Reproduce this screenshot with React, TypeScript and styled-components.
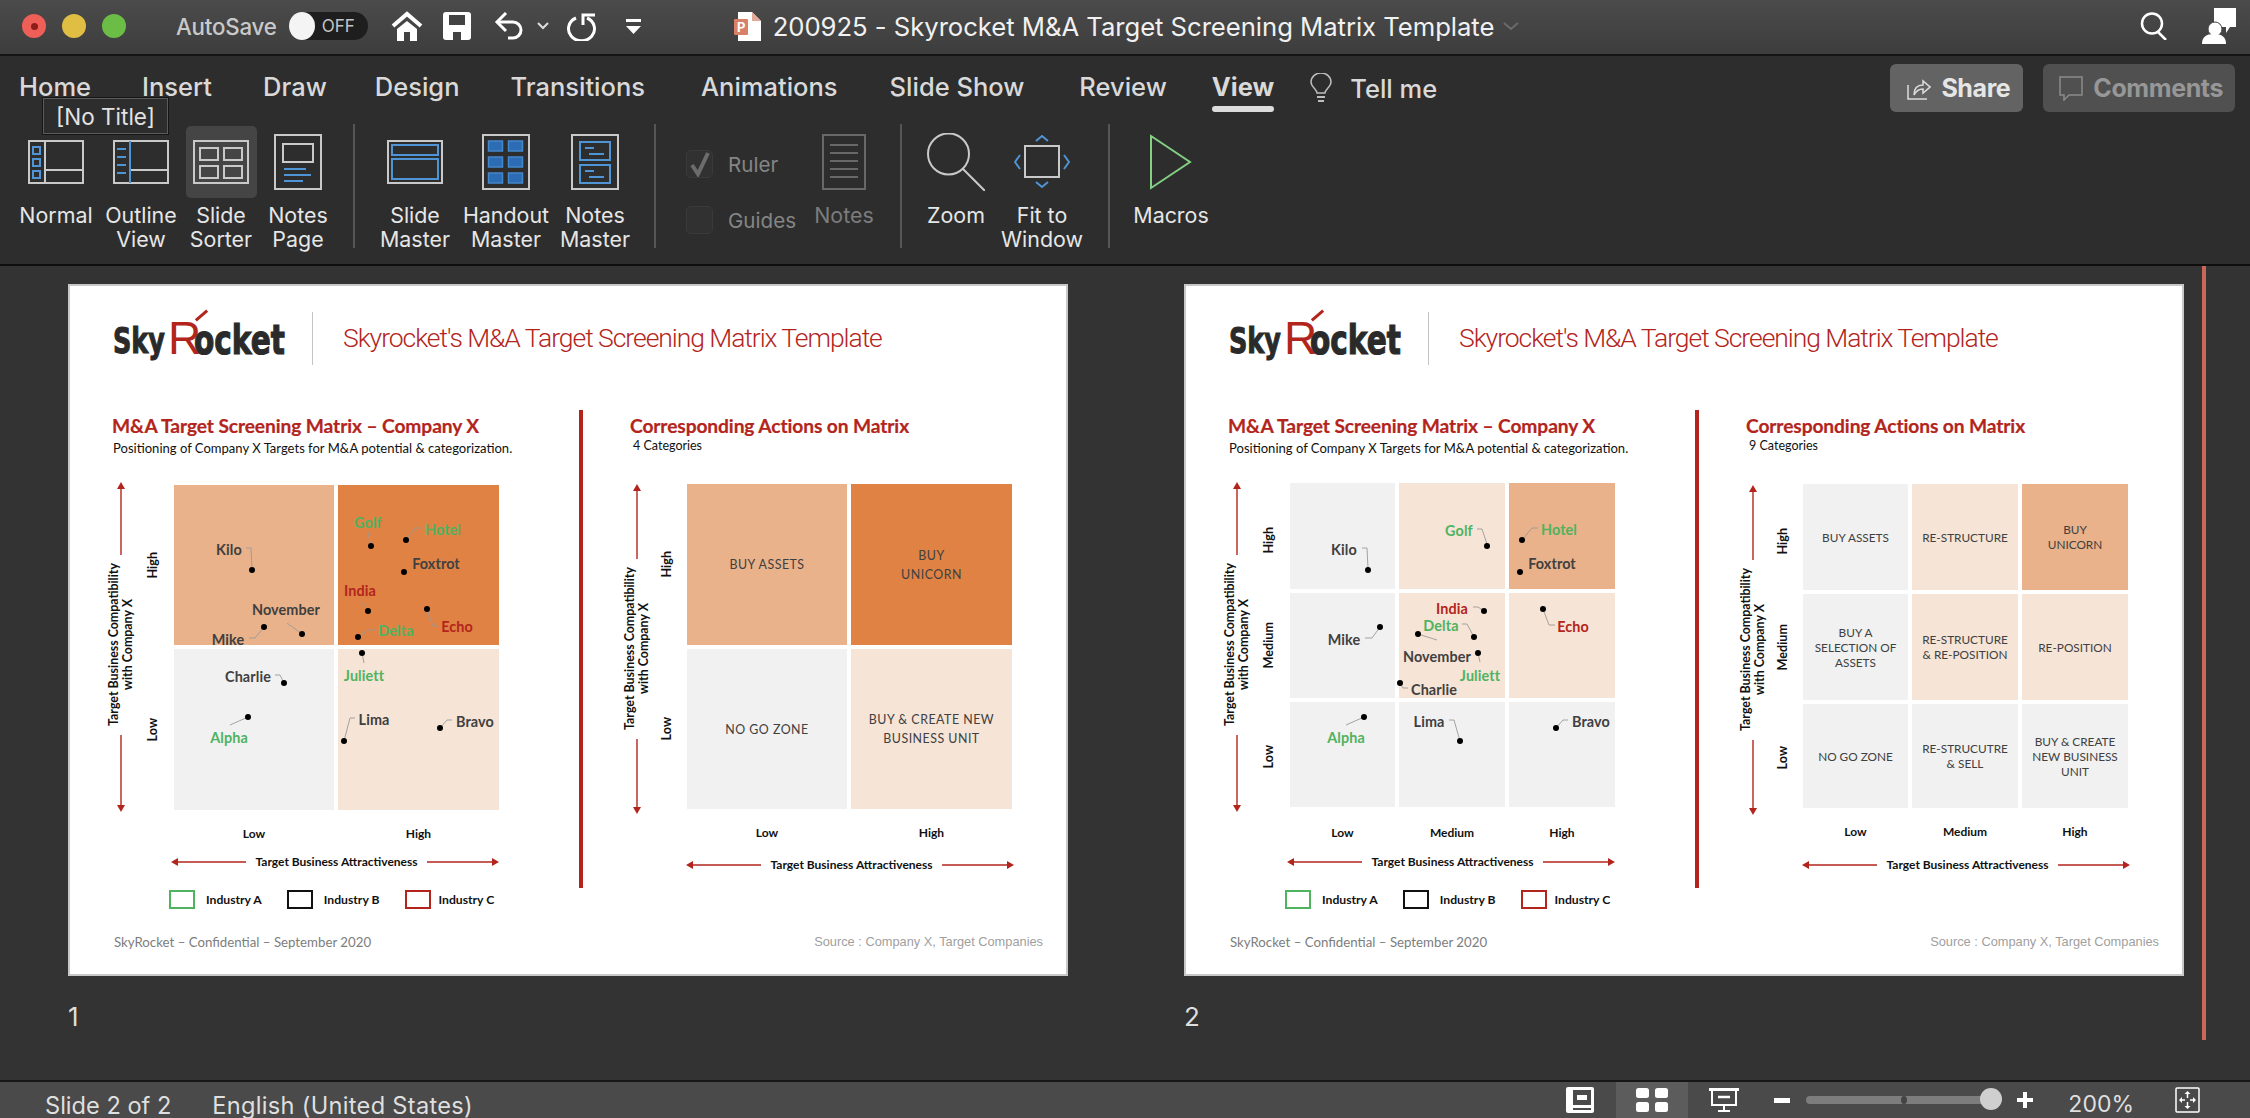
import { Fragment } from "react";
import styled, { createGlobalStyle } from "styled-components";

const RED = "#b3251c";
const GREEN = "#4fb35f";
const GREY = "#404040";
const SAND = "#f6e4d6";
const PEACH = "#eab28a";
const ORANGE = "#df8244";
const PALE = "#f1f1f1";

const GlobalStyle = createGlobalStyle`
  *,*::before,*::after{ box-sizing:border-box; }
  html,body{ margin:0; padding:0; background:#333; }
  body{ font-family: Inter, "Noto Sans", sans-serif; -webkit-font-smoothing:antialiased; }
`;

/* --- Window chrome --- */
const Page = styled.div`
  width: 2250px;
  height: 1118px;
  overflow: hidden;
  display: flex;
  flex-direction: column;
  background: #333;
`;

const TitleBar = styled.header`
  height: 56px;
  flex: none;
  display: flex;
  align-items: center;
  padding: 0 14px 2px 22px;
  background: linear-gradient(#4b4b4b, #3d3d3d);
  border-bottom: 2px solid #141414;
`;

const Light = styled.span<{ $c: string }>`
  width: 24px;
  height: 24px;
  border-radius: 50%;
  margin-right: 16px;
  background: ${(p) => p.$c};
  display: flex;
  align-items: center;
  justify-content: center;
`;
const LightDot = styled.i`
  width: 7px;
  height: 7px;
  border-radius: 50%;
  background: #8f1d17;
`;

const AutoSave = styled.span`
  margin-left: 34px;
  font-size: 22.3px;
  font-weight: 500;
  color: #c9c9c9;
  letter-spacing: -0.2px;
`;
const Toggle = styled.span`
  margin-left: 12px;
  width: 79px;
  height: 28px;
  border-radius: 14px;
  background: #1e1e1e;
  display: flex;
  align-items: center;
  gap: 7px;
  font-size: 17px;
  color: #c4c4c4;
`;
const Knob = styled.i`
  width: 26px;
  height: 28px;
  border-radius: 50%;
  background: #f4f4f4;
`;
const Slot = styled.span<{ $ml: number }>`
  margin-left: ${(p) => p.$ml}px;
  display: flex;
  align-items: center;
`;
const DocTitle = styled.span`
  margin-left: 12px;
  font-size: 25.7px;
  color: #f1f1f1;
  white-space: nowrap;
  letter-spacing: -0.05px;
`;
const RightTools = styled.span`
  margin-left: auto;
  display: flex;
  align-items: center;
  gap: 34px;
`;

const Ribbon = styled.section`
  height: 210px;
  flex: none;
  background: #2d2d2d;
  border-bottom: 2px solid #0e0e0e;
  position: relative;
`;
const TabRow = styled.nav`
  height: 70px;
  display: flex;
  align-items: flex-start;
  padding: 8px 15px 0 19px;
  gap: 51px;
`;
const Tab = styled.span<{ $active?: boolean; $nudge?: number }>`
  height: 48px;
  line-height: 46px;
  margin-left: ${(p) => p.$nudge ?? 0}px;
  font-size: 25.5px;
  font-weight: ${(p) => (p.$active ? 700 : 500)};
  color: #d9d9d9;
  position: relative;
  white-space: nowrap;
  ${(p) =>
    p.$active &&
    `&::after{content:"";position:absolute;left:0;right:0;bottom:0;height:6px;border-radius:3px;background:#dcdcdc;}`}
`;
const TellMe = styled.span`
  display: flex;
  align-items: center;
  gap: 18px;
  height: 48px;
  margin-left: -15px;
  font-size: 25.5px;
  font-weight: 500;
  color: #d9d9d9;
`;
const TopActions = styled.div`
  margin-left: auto;
  display: flex;
  gap: 20px;
`;
const ActionButton = styled.span<{ $muted?: boolean }>`
  height: 48px;
  padding: ${(p) => (p.$muted ? "0 12px 0 16px" : "0 13px 0 17px")};
  display: flex;
  align-items: center;
  gap: 10px;
  border-radius: 6px;
  font-size: 25px;
  font-weight: 700;
  letter-spacing: -0.4px;
  background: ${(p) => (p.$muted ? "#505050" : "#636363")};
  color: ${(p) => (p.$muted ? "#979797" : "#e6e6e6")};
`;
const Tooltip = styled.div`
  position: absolute;
  left: 43px;
  top: 42px;
  width: 125px;
  height: 36px;
  display: flex;
  align-items: center;
  justify-content: center;
  background: #2d2d2d;
  border: 1px solid #5b5b5b;
  box-shadow: 0 0 0 1px #161616;
  font-size: 22.5px;
  color: #e2e2e2;
`;

const ToolRow = styled.div`
  display: flex;
  align-items: flex-start;
  padding-left: 14px;
`;
const Tool = styled.div<{ $w: number; $ml?: number }>`
  width: ${(p) => p.$w}px;
  margin-left: ${(p) => p.$ml ?? 0}px;
  display: flex;
  flex-direction: column;
  align-items: center;
  flex: none;
`;
const IconWell = styled.div<{ $on?: boolean }>`
  width: 71px;
  height: 72px;
  display: flex;
  align-items: center;
  justify-content: center;
  border-radius: 5px;
  background: ${(p) => (p.$on ? "#454545" : "transparent")};
`;
const ToolLabel = styled.div<{ $off?: boolean }>`
  margin-top: 5px;
  font-size: 21.4px;
  line-height: 24px;
  text-align: center;
  white-space: pre-line;
  color: ${(p) => (p.$off ? "#7c7c7c" : "#e6e6e6")};
`;
const Divider = styled.div<{ $ml: number; $mr: number }>`
  width: 2px;
  height: 124px;
  margin: -2px ${(p) => p.$mr}px 0 ${(p) => p.$ml}px;
  background: #555;
  flex: none;
`;
const Checks = styled.div`
  width: 128px;
  flex: none;
  padding-top: 24px;
  display: flex;
  flex-direction: column;
  gap: 28px;
`;
const CheckRow = styled.div`
  display: flex;
  align-items: center;
  gap: 15px;
  font-size: 20.6px;
  color: #858585;
`;
const CheckBox = styled.span`
  width: 27px;
  height: 28px;
  border-radius: 5px;
  background: #313131;
  border: 1px solid #3a3a3a;
  display: flex;
  align-items: center;
  justify-content: center;
`;

/* --- Slide sorter --- */
const Workspace = styled.main`
  flex: 1;
  display: flex;
  gap: 116px;
  padding: 18px 0 0 68px;
  position: relative;
`;
const SlideColumn = styled.div`
  display: flex;
  flex-direction: column;
`;
const SlideNumber = styled.div`
  margin-top: 26px;
  font-size: 26px;
  line-height: 30px;
  color: #dedede;
`;
const Selection = styled.div`
  width: 4px;
  height: 774px;
  margin: -18px 0 0 -98px;
  background: #c9675a;
`;

const Slide = styled.article`
  width: 1000px;
  height: 692px;
  border: 2px solid #c8c8c8;
  background: #fff;
  display: flex;
  flex-direction: column;
  font-family: Lato, "Noto Sans", sans-serif;
`;
const SlideHead = styled.div`
  height: 53px;
  margin: 26px 0 0 43px;
  display: flex;
  align-items: center;
`;
const Logo = styled.div`
  position: relative;
  width: 171px;
  height: 53px;
  display: flex;
  align-items: center;
  flex: none;
  font-family: "DejaVu Sans", sans-serif;
  color: #2a2a2a;
`;
const LogoInk = styled.span<{ $w: number; $sx: number; $sy: number }>`
  display: inline-block;
  width: ${(p) => p.$w}px;
  margin-top: 2px;
  font-size: 34px;
  font-weight: 700;
  line-height: 40px;
  white-space: nowrap;
  transform-origin: left center;
  transform: scale(${(p) => p.$sx}, ${(p) => p.$sy});
  -webkit-text-stroke: 1px #2a2a2a;
`;
const LogoR = styled.span`
  display: inline-block;
  width: 26px;
  margin: 0 0 2px 4px;
  font-family: "Liberation Sans", sans-serif;
  font-size: 46px;
  line-height: 48px;
  color: ${RED};
`;
const LogoTick = styled.i`
  position: absolute;
  left: 81px;
  top: 2px;
  width: 15px;
  height: 3px;
  background: ${RED};
  transform: rotate(-41deg);
`;
const HeadRule = styled.div`
  width: 1px;
  height: 53px;
  margin: 0 30px 0 28px;
  background: #c4c4c4;
`;
const HeadTitle = styled.div`
  font-family: Roboto, "Liberation Sans", sans-serif;
  font-size: 26.5px;
  font-weight: 300;
  color: #b3251c;
  letter-spacing: -1.05px;
  white-space: nowrap;
  margin-top: -2px;
`;
const SlideBody = styled.div`
  margin-top: 45px;
  display: flex;
  align-items: flex-start;
`;
const RedRule = styled.div`
  width: 4px;
  height: 478px;
  background: ${RED};
  flex: none;
`;
const Panel = styled.div<{ $w: number; $ml: number }>`
  width: ${(p) => p.$w}px;
  margin-left: ${(p) => p.$ml}px;
  padding-top: 6px;
  flex: none;
`;
const Heading = styled.h2`
  margin: 0 0 0 -1px;
  font-size: 19.2px;
  line-height: 20px;
  font-weight: 700;
  letter-spacing: -0.1px;
  -webkit-text-stroke: 0.2px ${RED};
  color: ${RED};
  white-space: nowrap;
`;
const SubHeading = styled.p<{ $small?: boolean }>`
  margin: ${(p) => (p.$small ? "2px 0 0 2px" : "4px 0 0")};
  font-size: ${(p) => (p.$small ? 12.5 : 13.05)}px;
  line-height: 16px;
  color: #111;
  white-space: nowrap;
`;
const MatrixArea = styled.div<{ $top: number; $h: number; $inset: number }>`
  margin: ${(p) => p.$top}px 0 0 ${(p) => p.$inset}px;
  height: ${(p) => p.$h}px;
  display: flex;
  align-items: flex-start;
`;
const AxisColumn = styled.div<{ $w: number; $top: number }>`
  width: ${(p) => p.$w}px;
  margin-top: ${(p) => p.$top}px;
  display: flex;
  flex-direction: column;
  align-items: center;
  flex: none;
`;
const AxisTitle = styled.div`
  height: 180px;
  display: flex;
  align-items: center;
  justify-content: center;
  writing-mode: vertical-rl;
  transform: rotate(180deg);
  font-size: 12.4px;
  line-height: 14px;
  font-weight: 700;
  text-align: center;
  color: #111;
  white-space: pre-line;
`;
const Levels = styled.div<{ $w: number; $rows: string }>`
  width: ${(p) => p.$w}px;
  margin-right: 7px;
  display: grid;
  grid-template-rows: ${(p) => p.$rows};
  row-gap: 4px;
  flex: none;
`;
const Level = styled.div<{ $pad: number }>`
  display: flex;
  align-items: center;
  justify-content: center;
  padding-top: ${(p) => p.$pad}px;
`;
const LevelText = styled.span`
  writing-mode: vertical-rl;
  transform: rotate(180deg);
  font-size: 12.6px;
  font-weight: 700;
  color: #111;
`;
const Matrix = styled.div<{ $cols: string; $rows: string }>`
  position: relative;
  display: grid;
  grid-template-columns: ${(p) => p.$cols};
  grid-template-rows: ${(p) => p.$rows};
  gap: 4px;
  flex: none;
`;
const Cell = styled.div<{ $bg: string; $size: number; $track: number; $lh: number }>`
  background: ${(p) => p.$bg};
  display: flex;
  align-items: center;
  justify-content: center;
  text-align: center;
  white-space: pre-line;
  font-size: ${(p) => p.$size}px;
  letter-spacing: ${(p) => p.$track}px;
  line-height: ${(p) => p.$lh}px;
  color: ${GREY};
`;
const Overlay = styled.svg`
  position: absolute;
  left: 0;
  top: 0;
  overflow: visible;
  pointer-events: none;
`;
const PointName = styled.span<{ $x: number; $y: number; $c: string }>`
  position: absolute;
  left: ${(p) => p.$x}px;
  top: ${(p) => p.$y}px;
  transform: translate(-50%, -50%);
  font-size: 14.4px;
  font-weight: 700;
  letter-spacing: 0.1px;
  color: ${(p) => p.$c};
  white-space: nowrap;
`;
const XLabels = styled.div<{ $cols: string; $inset: number; $top: number }>`
  margin: ${(p) => p.$top}px 0 0 ${(p) => p.$inset}px;
  display: grid;
  grid-template-columns: ${(p) => p.$cols};
  column-gap: 4px;
  font-size: 12px;
  line-height: 16px;
  font-weight: 700;
  color: #111;
  text-align: center;
`;
const XAxis = styled.div<{ $inset: number; $top: number }>`
  margin: ${(p) => p.$top}px 0 0 ${(p) => p.$inset}px;
  width: 328px;
  display: flex;
  align-items: center;
  justify-content: space-between;
  font-size: 12px;
  line-height: 16px;
  font-weight: 700;
  color: #111;
  white-space: nowrap;
`;
const Legend = styled.div`
  margin: 20px 0 0 56px;
  display: flex;
  align-items: center;
  font-size: 12.2px;
  font-weight: 700;
  color: #111;
`;
const LegendBox = styled.i<{ $c: string; $ml: number; $mr: number }>`
  width: 26px;
  height: 19px;
  margin: 0 ${(p) => p.$mr}px 0 ${(p) => p.$ml}px;
  border: 2px solid ${(p) => p.$c};
`;
const SlideFoot = styled.div`
  margin-top: auto;
  padding: 0 23px 24px 44px;
  display: flex;
  justify-content: space-between;
  align-items: center;
`;
const FootLeft = styled.span`
  font-size: 13.25px;
  line-height: 16px;
  color: #7d7d7d;
`;
const FootRight = styled.span`
  font-family: "Liberation Sans", sans-serif;
  font-size: 12.8px;
  line-height: 16px;
  color: #a0a0a0;
`;

/* --- Status bar --- */
const StatusBar = styled.footer`
  height: 38px;
  flex: none;
  display: flex;
  align-items: center;
  padding-left: 45px;
  border-top: 2px solid #161616;
  background: #4a4a4a;
  font-size: 23.6px;
  color: #dfdfdf;
`;
const StatusText = styled.span<{ $ml?: number; $track?: number }>`
  margin-left: ${(p) => p.$ml ?? 0}px;
  margin-top: 10px;
  letter-spacing: ${(p) => p.$track ?? 0}px;
  white-space: nowrap;
`;
const StatusRight = styled.div`
  margin-left: auto;
  display: flex;
  align-items: center;
  height: 100%;
  padding-right: 50px;
`;
const ViewButton = styled.span<{ $on?: boolean }>`
  width: 72px;
  height: 100%;
  display: flex;
  align-items: center;
  justify-content: center;
  background: ${(p) => (p.$on ? "#5c5c5c" : "transparent")};
`;
const ZoomTrack = styled.div`
  position: relative;
  margin-left: 16px;
  width: 184px;
  height: 8px;
  border-radius: 4px;
  background: #7d7d7d;
`;
const ZoomMark = styled.i`
  position: absolute;
  left: 95px;
  top: 0;
  width: 6px;
  height: 8px;
  border-radius: 50%;
  background: #444;
`;
const ZoomKnob = styled.i`
  position: absolute;
  right: -12px;
  top: -8px;
  width: 22px;
  height: 22px;
  border-radius: 50%;
  background: #cfcfcf;
`;
const ZoomValue = styled.span`
  margin: 8px 41px 0 35px;
  font-size: 23px;
  white-space: nowrap;
`;

/* --- Ribbon drawings --- */
const G = "#c9c9c9";
const B = "#4f94d4";

const NormalIcon = () => (
  <svg width="56" height="44" fill="none" stroke={G} strokeWidth="2">
    <rect x="1" y="1" width="54" height="42" />
    <path d="M17 1v42M17 30h38" />
    <g stroke={B}>
      <rect x="5" y="7" width="7" height="7" />
      <rect x="5" y="19" width="7" height="7" />
      <rect x="5" y="31" width="7" height="7" />
    </g>
  </svg>
);
const OutlineIcon = () => (
  <svg width="56" height="44" fill="none" stroke={G} strokeWidth="2">
    <rect x="1" y="1" width="54" height="42" />
    <path d="M17 30h38" />
    <path d="M17 1v42M4 9h9M4 17h9M4 25h9M4 33h9" stroke={B} />
  </svg>
);
const SorterIcon = () => (
  <svg width="56" height="44" fill="none" stroke={G} strokeWidth="2">
    <rect x="1" y="1" width="54" height="42" />
    <rect x="7" y="8" width="18" height="12" />
    <rect x="31" y="8" width="18" height="12" />
    <rect x="7" y="26" width="18" height="12" />
    <rect x="31" y="26" width="18" height="12" />
  </svg>
);
const NotesPageIcon = () => (
  <svg width="48" height="56" fill="none" stroke={G} strokeWidth="2">
    <rect x="1" y="1" width="46" height="54" />
    <rect x="9" y="10" width="30" height="18" />
    <path d="M10 35h22M10 41h27M10 47h19" stroke={B} />
  </svg>
);
const SlideMasterIcon = () => (
  <svg width="56" height="44" fill="none" stroke={G} strokeWidth="2">
    <rect x="1" y="1" width="54" height="42" />
    <g stroke={B}>
      <rect x="5" y="5" width="46" height="10" />
      <rect x="5" y="19" width="46" height="20" />
    </g>
  </svg>
);
const HandoutIcon = () => (
  <svg width="48" height="56" fill="none" stroke={G} strokeWidth="2">
    <rect x="1" y="1" width="46" height="54" />
    <g fill="#2c6cb4" stroke="#4387cb" strokeWidth="1.5">
      {[7, 23, 39].map((y) => (
        <Fragment key={y}>
          <rect x="6.5" y={y} width="14" height="10" />
          <rect x="26.5" y={y} width="14" height="10" />
        </Fragment>
      ))}
    </g>
  </svg>
);
const NotesMasterIcon = () => (
  <svg width="48" height="56" fill="none" stroke={G} strokeWidth="2">
    <rect x="1" y="1" width="46" height="54" />
    <g stroke={B}>
      <rect x="9" y="8" width="30" height="18" />
      <rect x="9" y="31" width="30" height="18" />
      <path d="M14 14h9M18 20h15M14 37h9M18 43h15" />
    </g>
  </svg>
);
const NotesOffIcon = () => (
  <svg width="44" height="56" fill="none" stroke="#686868" strokeWidth="2">
    <rect x="1" y="1" width="42" height="54" />
    <path d="M8 11h28M8 19h28M8 27h28M8 35h28M8 43h28" />
  </svg>
);
const ZoomIcon = () => (
  <svg width="58" height="58" fill="none" stroke={G} strokeWidth="2">
    <circle cx="21.500" cy="21" r="20.500" />
    <path d="M36 36l22 22" />
  </svg>
);
const FitIcon = () => (
  <svg width="56" height="54" fill="none" strokeWidth="2">
    <rect x="11" y="11" width="34" height="31" stroke={G} />
    <path d="M22 6l6-5 6 5M22 47l6 5 6-5M6 20l-5 7 5 7M50 20l5 7-5 7" stroke={B} />
  </svg>
);
const MacroIcon = () => (
  <svg width="42" height="56" fill="none" stroke="#83cf83" strokeWidth="2">
    <path d="M1 2l39 26L1 54z" />
  </svg>
);
const BulbIcon = () => (
  <svg width="22" height="30" fill="none" stroke="#bdbdbd" strokeWidth="1.5">
    <path d="M7 20c0-4-6-6-6-11a10 9 0 0 1 20 0c0 5-6 7-6 11z" />
    <path d="M7 24h8M8 28h6" strokeWidth="2" />
  </svg>
);
const TickIcon = () => (
  <svg width="22" height="26" fill="none" stroke="#6c6c6c" strokeWidth="4">
    <path d="M3 14l6 9L19 2" />
  </svg>
);

/* --- Slide drawings --- */
const VArrow = ({ up, len }: { up?: boolean; len: number }) => (
  <svg width="12" height={len} style={{ flex: "none" }}>
    {up ? (
      <>
        <path d={`M6 6V${len}`} stroke={RED} strokeWidth="1.400" />
        <path d="M6 0l4 7H2z" fill={RED} />
      </>
    ) : (
      <>
        <path d={`M6 0V${len - 6}`} stroke={RED} strokeWidth="1.400" />
        <path d={`M6 ${len}l4-7H2z`} fill={RED} />
      </>
    )}
  </svg>
);
const HArrow = ({ left, len }: { left?: boolean; len: number }) => (
  <svg width={len} height="10" style={{ flex: "none" }}>
    {left ? (
      <>
        <path d={`M6 5H${len}`} stroke={RED} strokeWidth="1.400" />
        <path d="M0 5l7-4v8z" fill={RED} />
      </>
    ) : (
      <>
        <path d={`M0 5H${len - 6}`} stroke={RED} strokeWidth="1.400" />
        <path d={`M${len} 5l-7-4v8z`} fill={RED} />
      </>
    )}
  </svg>
);

/* --- Data --- */
type Point = { name: string; c: string; at: [number, number]; dot: [number, number]; lead?: string };

const quadPoints: Point[] = [
  { name: "Kilo", c: GREY, at: [55, 64], dot: [78, 85], lead: "72,63 77,63 78,83" },
  { name: "November", c: GREY, at: [112, 124], dot: [128, 149], lead: "113,138 128,149" },
  { name: "Mike", c: GREY, at: [54, 154], dot: [90, 142], lead: "75,153 81,153 90,142" },
  { name: "Golf", c: GREEN, at: [194, 37], dot: [197, 61], lead: "194,47 197,61" },
  { name: "Hotel", c: GREEN, at: [269, 44], dot: [232, 55], lead: "248,43 241,43 232,55" },
  { name: "Foxtrot", c: GREY, at: [262, 78], dot: [230, 87] },
  { name: "India", c: RED, at: [186, 105], dot: [194, 126], lead: "187,116 194,126" },
  { name: "Echo", c: RED, at: [283, 141], dot: [253, 124], lead: "264,141 259,141 253,124" },
  { name: "Delta", c: GREEN, at: [222, 145], dot: [184, 152], lead: "202,145 194,145 184,152" },
  { name: "Juliett", c: GREEN, at: [190, 190], dot: [188, 168], lead: "190,178 188,168" },
  { name: "Charlie", c: GREY, at: [74, 191], dot: [110, 198], lead: "101,190 106,190 110,198" },
  { name: "Alpha", c: GREEN, at: [55, 252], dot: [74, 232], lead: "56,240 74,232" },
  { name: "Lima", c: GREY, at: [200, 234], dot: [170, 256], lead: "181,233 176,233 170,256" },
  { name: "Bravo", c: GREY, at: [301, 236], dot: [266, 243], lead: "278,235 273,235 266,243" },
];

const ninePoints: Point[] = [
  { name: "Kilo", c: GREY, at: [54, 66], dot: [78, 87], lead: "72,65 77,65 78,85" },
  { name: "Golf", c: GREEN, at: [169, 47], dot: [197, 63], lead: "187,46 192,46 197,61" },
  { name: "Hotel", c: GREEN, at: [269, 46], dot: [232, 57], lead: "248,45 242,45 232,57" },
  { name: "Foxtrot", c: GREY, at: [262, 80], dot: [230, 89] },
  { name: "Mike", c: GREY, at: [54, 156], dot: [90, 144], lead: "75,155 82,155 90,144" },
  { name: "India", c: RED, at: [162, 125], dot: [194, 128], lead: "183,124 188,124 194,128" },
  { name: "Delta", c: GREEN, at: [151, 142], dot: [184, 154], lead: "172,141 177,141 184,154" },
  { name: "November", c: GREY, at: [147, 173], dot: [128, 151], lead: "147,157 128,151" },
  { name: "Echo", c: RED, at: [283, 143], dot: [253, 126], lead: "265,142 259,142 253,126" },
  { name: "Juliett", c: GREEN, at: [190, 192], dot: [188, 170], lead: "190,179 188,170" },
  { name: "Charlie", c: GREY, at: [144, 206], dot: [110, 200], lead: "118,205 113,205 110,200" },
  { name: "Alpha", c: GREEN, at: [56, 254], dot: [74, 234], lead: "56,242 74,234" },
  { name: "Lima", c: GREY, at: [139, 238], dot: [170, 258], lead: "159,237 164,237 170,258" },
  { name: "Bravo", c: GREY, at: [301, 238], dot: [266, 245], lead: "278,237 273,237 266,245" },
];

type CellSpec = { bg: string; text?: string };

type MatrixSpec = {
  cols: number[];
  rows: number[];
  cells: CellSpec[];
  xLabels: string[];
  levels: { text: string; pad: number }[];
  points?: Point[];
  inset: number;
  axisW: number;
  levelW: number;
  gridTop: number;
  axisTop: number;
  up: number;
  down: number;
  labelTop: number;
  arrowTop: number;
  arrowInset: number;
  size: number;
  track: number;
  lh: number;
};

const px = (a: number[]) => a.map((n) => `${n}px`).join(" ");
const total = (a: number[]) => a.reduce((s, n) => s + n, 0) + (a.length - 1) * 4;

function MatrixBlock({ spec }: { spec: MatrixSpec }) {
  const cols = px(spec.cols);
  const rows = px(spec.rows);
  const gridX = spec.inset + spec.axisW + spec.levelW + 7;
  return (
    <>
      <MatrixArea $top={spec.gridTop} $h={total(spec.rows)} $inset={spec.inset}>
        <AxisColumn $w={spec.axisW} $top={spec.axisTop}>
          <VArrow up len={spec.up} />
          <AxisTitle>{"Target Business Compatibility\nwith Company X"}</AxisTitle>
          <VArrow len={spec.down} />
        </AxisColumn>
        <Levels $w={spec.levelW} $rows={rows}>
          {spec.levels.map((l) => (
            <Level key={l.text} $pad={l.pad}>
              <LevelText>{l.text}</LevelText>
            </Level>
          ))}
        </Levels>
        <Matrix $cols={cols} $rows={rows}>
          {spec.cells.map((cell, i) => (
            <Cell key={i} $bg={cell.bg} $size={spec.size} $track={spec.track} $lh={spec.lh}>
              {cell.text}
            </Cell>
          ))}
          {spec.points && (
            <>
              <Overlay width={total(spec.cols)} height={total(spec.rows)}>
                {spec.points.map((p) => (
                  <g key={p.name}>
                    {p.lead && <polyline points={p.lead} fill="none" stroke="#9a9a9a" strokeWidth="0.9" />}
                    <circle cx={p.dot[0]} cy={p.dot[1]} r="3" fill="#000" />
                  </g>
                ))}
              </Overlay>
              {spec.points.map((p) => (
                <PointName key={p.name} $x={p.at[0]} $y={p.at[1]} $c={p.c}>
                  {p.name}
                </PointName>
              ))}
            </>
          )}
        </Matrix>
      </MatrixArea>
      <XLabels $cols={cols} $inset={gridX} $top={spec.labelTop}>
        {spec.xLabels.map((l) => (
          <span key={l}>{l}</span>
        ))}
      </XLabels>
      <XAxis $inset={gridX + spec.arrowInset} $top={spec.arrowTop}>
        <HArrow left len={75} />
        <span>Target Business Attractiveness</span>
        <HArrow len={72} />
      </XAxis>
    </>
  );
}

function SlideCard({ left, right, count }: { left: MatrixSpec; right: MatrixSpec; count: string }) {
  return (
    <Slide>
      <SlideHead>
        <Logo>
          <LogoInk $w={51} $sx={0.75} $sy={1.05}>Sky</LogoInk>
          <LogoR>R</LogoR>
          <LogoInk $w={90} $sx={0.87} $sy={1.2}>ocket</LogoInk>
          <LogoTick />
        </Logo>
        <HeadRule />
        <HeadTitle>Skyrocket's M&amp;A Target Screening Matrix Template</HeadTitle>
      </SlideHead>
      <SlideBody>
        <Panel $w={466} $ml={43}>
          <Heading>M&amp;A Target Screening Matrix – Company X</Heading>
          <SubHeading>Positioning of Company X Targets for M&amp;A potential &amp; categorization.</SubHeading>
          <MatrixBlock spec={left} />
          <Legend>
            <LegendBox $c={GREEN} $ml={0} $mr={11} />
            Industry A
            <LegendBox $c="#111" $ml={25} $mr={11} />
            Industry B
            <LegendBox $c={RED} $ml={25} $mr={8} />
            Industry C
          </Legend>
        </Panel>
        <RedRule />
        <Panel $w={440} $ml={48}>
          <Heading>Corresponding Actions on Matrix</Heading>
          <SubHeading $small>{count}</SubHeading>
          <MatrixBlock spec={right} />
        </Panel>
      </SlideBody>
      <SlideFoot>
        <FootLeft>SkyRocket – Confidential – September 2020</FootLeft>
        <FootRight>Source : Company X, Target Companies</FootRight>
      </SlideFoot>
    </Slide>
  );
}

const leftBase = { inset: -8, axisW: 32, levelW: 30, axisTop: -3, up: 73, down: 77, arrowInset: -3 };
const rightBase = { inset: -9, axisW: 30, levelW: 28, axisTop: 0, up: 75, down: 75, arrowInset: -1 };

const quadLeft: MatrixSpec = {
  ...leftBase,
  cols: [160, 161],
  rows: [160, 161],
  cells: [{ bg: PEACH }, { bg: ORANGE }, { bg: PALE }, { bg: SAND }],
  xLabels: ["Low", "High"],
  levels: [{ text: "High", pad: 0 }, { text: "Low", pad: 0 }],
  points: quadPoints,
  gridTop: 29,
  labelTop: 16,
  arrowTop: 12,
  size: 12.4,
  track: 0.5,
  lh: 19,
};
const quadRight: MatrixSpec = {
  ...rightBase,
  cols: [160, 161],
  rows: [161, 160],
  cells: [
    { bg: PEACH, text: "BUY ASSETS" },
    { bg: ORANGE, text: "BUY\nUNICORN" },
    { bg: PALE, text: "NO GO ZONE" },
    { bg: SAND, text: "BUY & CREATE NEW\nBUSINESS UNIT" },
  ],
  xLabels: ["Low", "High"],
  levels: [{ text: "High", pad: 0 }, { text: "Low", pad: 0 }],
  gridTop: 30,
  labelTop: 16,
  arrowTop: 16,
  size: 12.4,
  track: 0.5,
  lh: 19,
};
const nineLevels = [
  { text: "High", pad: 8 },
  { text: "Medium", pad: 0 },
  { text: "Low", pad: 4 },
];
const nineLeft: MatrixSpec = {
  ...leftBase,
  axisTop: -1,
  cols: [105, 106, 106],
  rows: [106, 105, 105],
  cells: [
    { bg: PALE },
    { bg: SAND },
    { bg: PEACH },
    { bg: PALE },
    { bg: SAND },
    { bg: SAND },
    { bg: PALE },
    { bg: PALE },
    { bg: PALE },
  ],
  xLabels: ["Low", "Medium", "High"],
  levels: nineLevels,
  points: ninePoints,
  gridTop: 27,
  labelTop: 18,
  arrowTop: 13,
  size: 12,
  track: 0,
  lh: 15,
};
const nineRight: MatrixSpec = {
  ...rightBase,
  axisTop: 1,
  cols: [105, 106, 106],
  rows: [106, 106, 104],
  cells: [
    { bg: PALE, text: "BUY ASSETS" },
    { bg: SAND, text: "RE-STRUCTURE" },
    { bg: PEACH, text: "BUY\nUNICORN" },
    { bg: PALE, text: "BUY A\nSELECTION OF\nASSETS" },
    { bg: SAND, text: "RE-STRUCTURE\n& RE-POSITION" },
    { bg: SAND, text: "RE-POSITION" },
    { bg: PALE, text: "NO GO ZONE" },
    { bg: PALE, text: "RE-STRUCUTRE\n& SELL" },
    { bg: PALE, text: "BUY & CREATE\nNEW BUSINESS\nUNIT" },
  ],
  xLabels: ["Low", "Medium", "High"],
  levels: nineLevels,
  gridTop: 30,
  labelTop: 16,
  arrowTop: 17,
  size: 11.8,
  track: 0,
  lh: 15,
};

export default function App() {
  return (
    <Page>
      <GlobalStyle />
      <TitleBar>
        <Light $c="#ee5f57"><LightDot /></Light>
        <Light $c="#e0bd43" />
        <Light $c="#6cbd45" />
        <AutoSave>AutoSave</AutoSave>
        <Toggle><Knob />OFF</Toggle>
        <Slot $ml={23}>
          <svg width="32" height="30">
            <path d="M2 15L16 3l14 12" fill="none" stroke="#fff" strokeWidth="4" />
            <path d="M6 18l10-8 10 8v12h-7v-9h-6v9H6z" fill="#fff" />
          </svg>
        </Slot>
        <Slot $ml={20}>
          <svg width="28" height="28">
            <rect width="28" height="28" rx="3" fill="#fff" />
            <rect x="6" y="3" width="16" height="10" fill="#434343" />
            <rect x="10" y="20" width="8" height="8" fill="#434343" />
          </svg>
        </Slot>
        <Slot $ml={23}>
          <svg width="29" height="28" fill="none" stroke="#fff" strokeWidth="3">
            <path d="M12 1L3 10l9 9" />
            <path d="M3 10h16a8 8 0 0 1 0 16h-5" />
          </svg>
        </Slot>
        <Slot $ml={14}>
          <svg width="12" height="8" fill="none" stroke="#ddd" strokeWidth="2">
            <path d="M1 1l5 5 5-5" />
          </svg>
        </Slot>
        <Slot $ml={17}>
          <svg width="31" height="29" fill="none" stroke="#fff" strokeWidth="3">
            <path d="M10 6a13 12 0 1 0 11 0" />
            <path d="M17 13V3h12" />
          </svg>
        </Slot>
        <Slot $ml={29}>
          <svg width="15" height="15" fill="#fff">
            <rect width="15" height="3" />
            <path d="M0 7h15l-7.500 8z" />
          </svg>
        </Slot>
        <Slot $ml={93}>
          <svg width="27" height="29">
            <path d="M4 0h14l9 9v20H4z" fill="#fff" />
            <path d="M18 0l9 9h-9z" fill="#e2a898" />
            <rect y="7" width="14" height="16" rx="1" fill="#d9806a" />
            <text x="3" y="20" fontSize="13" fontWeight="700" fill="#fff" fontFamily="Inter">P</text>
          </svg>
        </Slot>
        <DocTitle>200925 - Skyrocket M&amp;A Target Screening Matrix Template</DocTitle>
        <Slot $ml={9}>
          <svg width="16" height="9" fill="none" stroke="#6b6b6b" strokeWidth="2">
            <path d="M1 1l7 6 7-6" />
          </svg>
        </Slot>
        <RightTools>
          <svg width="28" height="28" fill="none" stroke="#fff" strokeWidth="2.500">
            <circle cx="12" cy="11.500" r="10" />
            <path d="M18 20l8 8" />
          </svg>
          <svg width="34" height="36" fill="#fff">
            <path d="M12 0h22v19h-6l-4 6v-6H12z" />
            <circle cx="13" cy="21" r="7" stroke="#444" />
            <path d="M0 36c0-7 4-10 12-10s12 3 12 10z" />
          </svg>
        </RightTools>
      </TitleBar>

      <Ribbon>
        <TabRow>
          <Tab>Home</Tab>
          <Tab>Insert</Tab>
          <Tab>Draw</Tab>
          <Tab $nudge={-3}>Design</Tab>
          <Tab>Transitions</Tab>
          <Tab $nudge={5}>Animations</Tab>
          <Tab $nudge={1}>Slide Show</Tab>
          <Tab $nudge={4}>Review</Tab>
          <Tab $active $nudge={-6}>View</Tab>
          <TellMe><BulbIcon />Tell me</TellMe>
          <TopActions>
            <ActionButton>
              <svg width="24" height="24" fill="none" stroke="#dcdcdc" strokeWidth="1.500">
                <path d="M1 9v14h19" />
                <path d="M7 19c0-7 3-10 9-10V5l7 6-7 6v-4c-4 0-7 2-9 6z" />
              </svg>
              Share
            </ActionButton>
            <ActionButton $muted>
              <svg width="24" height="25" fill="none" stroke="#8a8a8a" strokeWidth="1.500">
                <path d="M1 1h22v18H10l-5 5v-5H1z" />
              </svg>
              Comments
            </ActionButton>
          </TopActions>
        </TabRow>
        <ToolRow>
          <Tool $w={84}><IconWell><NormalIcon /></IconWell><ToolLabel>Normal</ToolLabel></Tool>
          <Tool $w={86}><IconWell><OutlineIcon /></IconWell><ToolLabel>{"Outline\nView"}</ToolLabel></Tool>
          <Tool $w={74}><IconWell $on><SorterIcon /></IconWell><ToolLabel>{"Slide\nSorter"}</ToolLabel></Tool>
          <Tool $w={80}><IconWell><NotesPageIcon /></IconWell><ToolLabel>{"Notes\nPage"}</ToolLabel></Tool>
          <Divider $ml={15} $mr={16} />
          <Tool $w={88}><IconWell><SlideMasterIcon /></IconWell><ToolLabel>{"Slide\nMaster"}</ToolLabel></Tool>
          <Tool $w={94}><IconWell><HandoutIcon /></IconWell><ToolLabel>{"Handout\nMaster"}</ToolLabel></Tool>
          <Tool $w={84}><IconWell><NotesMasterIcon /></IconWell><ToolLabel>{"Notes\nMaster"}</ToolLabel></Tool>
          <Divider $ml={17} $mr={30} />
          <Checks>
            <CheckRow><CheckBox><TickIcon /></CheckBox>Ruler</CheckRow>
            <CheckRow><CheckBox />Guides</CheckRow>
          </Checks>
          <Tool $w={60}><IconWell><NotesOffIcon /></IconWell><ToolLabel $off>Notes</ToolLabel></Tool>
          <Divider $ml={26} $mr={19} />
          <Tool $w={70}><IconWell><ZoomIcon /></IconWell><ToolLabel>Zoom</ToolLabel></Tool>
          <Tool $w={102}><IconWell><FitIcon /></IconWell><ToolLabel>{"Fit to\nWindow"}</ToolLabel></Tool>
          <Divider $ml={15} $mr={19} />
          <Tool $w={84}><IconWell><MacroIcon /></IconWell><ToolLabel>Macros</ToolLabel></Tool>
        </ToolRow>
        <Tooltip>[No Title]</Tooltip>
      </Ribbon>

      <Workspace>
        <SlideColumn>
          <SlideCard left={quadLeft} right={quadRight} count="4 Categories" />
          <SlideNumber>1</SlideNumber>
        </SlideColumn>
        <SlideColumn>
          <SlideCard left={nineLeft} right={nineRight} count="9 Categories" />
          <SlideNumber>2</SlideNumber>
        </SlideColumn>
        <Selection />
      </Workspace>

      <StatusBar>
        <StatusText>Slide 2 of 2</StatusText>
        <StatusText $ml={41} $track={0.3}>English (United States)</StatusText>
        <StatusRight>
          <ViewButton>
            <svg width="28" height="26">
              <rect width="28" height="26" rx="2" fill="#fff" />
              <rect x="7" y="3" width="18" height="15" fill="#4a4a4a" />
              <rect x="11" y="8" width="10" height="5" fill="#fff" />
              <rect x="7" y="21" width="18" height="2" fill="#4a4a4a" />
            </svg>
          </ViewButton>
          <ViewButton $on>
            <svg width="32" height="24" fill="#fff">
              <rect width="13" height="10" rx="2.500" />
              <rect x="19" width="13" height="10" rx="2.500" />
              <rect y="14" width="13" height="10" rx="2.500" />
              <rect x="19" y="14" width="13" height="10" rx="2.500" />
            </svg>
          </ViewButton>
          <ViewButton>
            <svg width="30" height="24" fill="none" stroke="#fff" strokeWidth="2">
              <path d="M0 1.500h30" strokeWidth="3" />
              <path d="M3 2v15h24V2M15 17v6M9 23h12" />
              <path d="M9 9h12" strokeWidth="2.500" />
            </svg>
          </ViewButton>
          <Slot $ml={14}>
            <svg width="16" height="5" fill="#fff"><rect width="16" height="5" /></svg>
          </Slot>
          <ZoomTrack>
            <ZoomMark />
            <ZoomKnob />
          </ZoomTrack>
          <Slot $ml={27}>
            <svg width="16" height="16" fill="#fff">
              <path d="M6 0h4v6h6v4h-6v6H6v-6H0V6h6z" />
            </svg>
          </Slot>
          <ZoomValue>200%</ZoomValue>
          <svg width="25" height="26" fill="none" stroke="#fff" strokeWidth="1.500">
            <rect x="1" y="1" width="23" height="24" rx="1" />
            <path d="M12.500 5v6M5 13h5M15 13h5M12.500 15v6" />
            <path d="M12.500 4l3 3h-6zM12.500 22l3-3h-6zM4 13l3-3v6zM21 13l-3-3v6z" fill="#fff" stroke="none" />
          </svg>
        </StatusRight>
      </StatusBar>
    </Page>
  );
}
